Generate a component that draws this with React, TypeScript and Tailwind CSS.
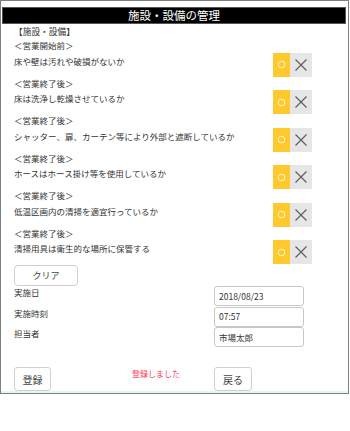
import React from "react";

const font = { fontFamily: '"Noto Sans CJK JP", "Noto Sans", sans-serif' };

const items = [
  { label: "＜営業開始前＞", text: "床や壁は汚れや破損がないか" },
  { label: "＜営業終了後＞", text: "床は洗浄し乾燥させているか" },
  { label: "＜営業終了後＞", text: "シャッター、扉、カーテン等により外部と遮断しているか" },
  { label: "＜営業終了後＞", text: "ホースはホース掛け等を使用しているか" },
  { label: "＜営業終了後＞", text: "低温区画内の清掃を適宜行っているか" },
  { label: "＜営業終了後＞", text: "清掃用具は衛生的な場所に保管する" },
];

function Toggle() {
  return (
    <div className="flex h-6 w-[39px] shrink-0">
      <div className="flex w-[17px] items-center justify-center bg-[#ffc82c]">
        <svg width="9" height="9" viewBox="0 0 9 9">
          <circle cx="4.5" cy="4.5" r="3.2" fill="none" stroke="#fff1c2" strokeWidth="1.1" />
        </svg>
      </div>
      <div className="flex w-[22px] items-center justify-center bg-[#e6e6e6]">
        <svg width="12" height="12" viewBox="0 0 12 12">
          <path d="M0.5 0.5 L11.5 11.5 M11.5 0.5 L0.5 11.5" stroke="#5a5a5a" strokeWidth="1.1" fill="none" />
        </svg>
      </div>
    </div>
  );
}

export default function App() {
  return (
    <div className="h-[431px] w-[350px] bg-white" style={font}>
      <div className="flex h-[394px] w-[349px] flex-col border border-[#808080] bg-white">
        <div className="ml-px mt-[6px] flex h-[19px] w-[344px] items-center justify-center border border-[#555] bg-black text-[11.5px] leading-none text-white">
          施設・設備の管理
        </div>
        <div className="pl-[13px]">
          <div className="h-[15px] text-[8.7px] leading-[15px] text-[#333]">【施設・設備】</div>
          {items.map((it, i) => (
            <div key={i} className="w-[298px]">
              <div className="h-[13.5px] text-[8.5px] leading-[13.5px] text-[#333]">{it.label}</div>
              <div className="flex items-start justify-between">
                <div className="mt-px text-[8.5px] leading-[14px] text-[#333]">{it.text}</div>
                <Toggle />
              </div>
            </div>
          ))}
          <button className="mt-px flex h-[21px] w-[64px] items-center justify-center rounded-[4px] border border-[#cfcfcf] bg-white text-[9px] text-[#444]">
            クリア
          </button>
          {[
            ["実施日", "2018/08/23"],
            ["実施時刻", "07:57"],
            ["担当者", "市場太郎"],
          ].map(([l, v], i) => (
            <div key={i} className="flex h-[20.5px]">
              <div className="w-[200px] text-[8.5px] leading-[12px] text-[#333]">{l}</div>
              <div className="flex h-[20px] w-[90px] items-center rounded-[3px] border border-[#c8c8c8] bg-white pl-[4px] text-[8.5px] text-[#333]">
                {v}
              </div>
            </div>
          ))}
          <div className="mt-[19.5px] flex h-[24px]">
            <div className="w-[200px] flex">
              <button className="flex h-[24px] w-[37px] items-center justify-center rounded-[3px] border border-[#d0d0d0] bg-white text-[10px] text-[#444]">
                登録
              </button>
              <div className="ml-[81px] mt-[1px] text-[8px] leading-[12px] text-[#ff3355]">登録しました</div>
            </div>
            <button className="flex h-[24px] w-[38px] items-center justify-center rounded-[3px] border border-[#d0d0d0] bg-white text-[10px] text-[#444]">
              戻る
            </button>
          </div>
        </div>
        <div className="mt-auto h-[2px] w-full bg-[#e4f5f5]" />
      </div>
    </div>
  );
}
